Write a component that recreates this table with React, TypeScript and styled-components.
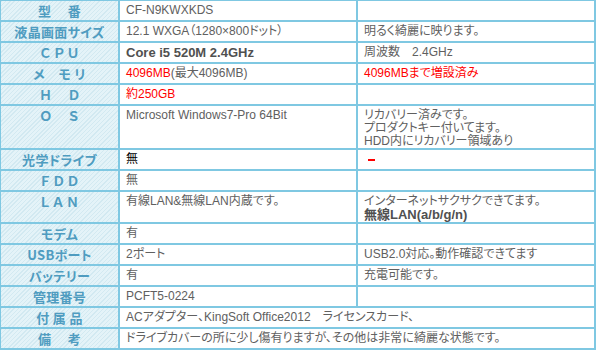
import React from "react";
import styled, { createGlobalStyle } from "styled-components";

const GlobalStyle = createGlobalStyle`
  html, body {
    margin: 0;
    padding: 0;
    background: #ffffff;
    overflow: hidden;
  }
`;

const Page = styled.div`
  width: 596px;
  height: 350px;
  overflow: hidden;
`;

const SpecTable = styled.table`
  width: 597px;
  margin: -1px 0 0 -1px;
  border-collapse: separate;
  border-spacing: 2px;
  background: #7fc8e2;
  table-layout: fixed;
  font-family: "Liberation Sans", "Noto Sans CJK JP", sans-serif;
  font-feature-settings: "palt";
`;

const HeadCell = styled.th`
  width: 117px;
  height: 19px;
  padding: 3px 0 0;
  box-sizing: border-box;
  vertical-align: top;
  text-align: center;
  white-space: pre;
  font-family: "Noto Sans CJK JP", sans-serif;
  font-size: 13px;
  line-height: 13px;
  font-weight: 700;
  letter-spacing: 0.3px;
  color: #4f9cc0;
  background: repeating-linear-gradient(
    -45deg,
    #e4f3f8 0px,
    #e4f3f8 2px,
    #d2e9f1 2px,
    #d2e9f1 3px
  );
`;

const Cell = styled.td<{ $red?: boolean; $bold?: boolean }>`
  height: 19px;
  padding: 3px 6px 0;
  box-sizing: border-box;
  vertical-align: top;
  background: #ffffff;
  font-size: 12px;
  line-height: 13px;
  color: ${({ $red }) => ($red ? "#ff0000" : "#606060")};
  font-weight: ${({ $bold }) => ($bold ? 700 : 400)};
  ${({ $bold }) => ($bold ? "font-size: 13px; color: #505050;" : "")}
`;

const Red = styled.span`
  color: #ff0000;
`;

const Black = styled.span`
  color: #000000;
`;

const Strong = styled.b`
  font-size: 13px;
  font-weight: 700;
  color: #505050;
`;

const Dash = styled.span`
  display: inline-block;
  margin: 6px 0 0 4px;
  width: 7px;
  height: 2px;
  background: #ff0000;
  vertical-align: top;
`;

export default function App() {
  return (
    <Page>
      <GlobalStyle />
      <SpecTable>
        <colgroup>
          <col style={{ width: 117 }} />
          <col />
          <col />
        </colgroup>
        <tbody>
          <tr>
            <HeadCell>{"型　 番"}</HeadCell>
            <Cell>CF-N9KWXKDS</Cell>
            <Cell></Cell>
          </tr>
          <tr>
            <HeadCell>液晶画面サイズ</HeadCell>
            <Cell>12.1 WXGA（1280×800ドット）</Cell>
            <Cell>明るく綺麗に映ります。</Cell>
          </tr>
          <tr>
            <HeadCell>{"Ｃ Ｐ Ｕ"}</HeadCell>
            <Cell $bold>Core i5 520M 2.4GHz</Cell>
            <Cell>周波数　2.4GHz</Cell>
          </tr>
          <tr>
            <HeadCell>{"メ　モ リ"}</HeadCell>
            <Cell>
              <Red>4096MB</Red>(最大4096MB)
            </Cell>
            <Cell $red>4096MBまで増設済み</Cell>
          </tr>
          <tr>
            <HeadCell>{"Ｈ　 Ｄ"}</HeadCell>
            <Cell $red>約250GB</Cell>
            <Cell></Cell>
          </tr>
          <tr>
            <HeadCell>{"Ｏ　 Ｓ"}</HeadCell>
            <Cell>Microsoft Windows7-Pro 64Bit</Cell>
            <Cell>
              リカバリー済みです。
              <br />
              プロダクトキー付いてます。
              <br />
              HDD内にリカバリー領域あり
            </Cell>
          </tr>
          <tr>
            <HeadCell>光学ドライブ</HeadCell>
            <Cell>
              <Black>無</Black>
            </Cell>
            <Cell>
              <Dash />
            </Cell>
          </tr>
          <tr>
            <HeadCell>{"Ｆ Ｄ Ｄ"}</HeadCell>
            <Cell>無</Cell>
            <Cell></Cell>
          </tr>
          <tr>
            <HeadCell>{"Ｌ Ａ Ｎ"}</HeadCell>
            <Cell>有線LAN&amp;無線LAN内蔵です。</Cell>
            <Cell>
              インターネットサクサクできてます。
              <br />
              <Strong>無線LAN(a/b/g/n)</Strong>
            </Cell>
          </tr>
          <tr>
            <HeadCell>モデム</HeadCell>
            <Cell>有</Cell>
            <Cell></Cell>
          </tr>
          <tr>
            <HeadCell>USBポート</HeadCell>
            <Cell>2ポート</Cell>
            <Cell>USB2.0対応。動作確認できてます</Cell>
          </tr>
          <tr>
            <HeadCell>バッテリー</HeadCell>
            <Cell>有</Cell>
            <Cell>充電可能です。</Cell>
          </tr>
          <tr>
            <HeadCell>管理番号</HeadCell>
            <Cell>PCFT5-0224</Cell>
            <Cell></Cell>
          </tr>
          <tr>
            <HeadCell>{"付 属 品"}</HeadCell>
            <Cell colSpan={2}>ACアダプター、KingSoft Office2012　ライセンスカード、</Cell>
          </tr>
          <tr>
            <HeadCell>{"備　 考"}</HeadCell>
            <Cell colSpan={2}>
              ドライブカバーの所に少し傷有りますが、その他は非常に綺麗な状態です。
            </Cell>
          </tr>
        </tbody>
      </SpecTable>
    </Page>
  );
}
